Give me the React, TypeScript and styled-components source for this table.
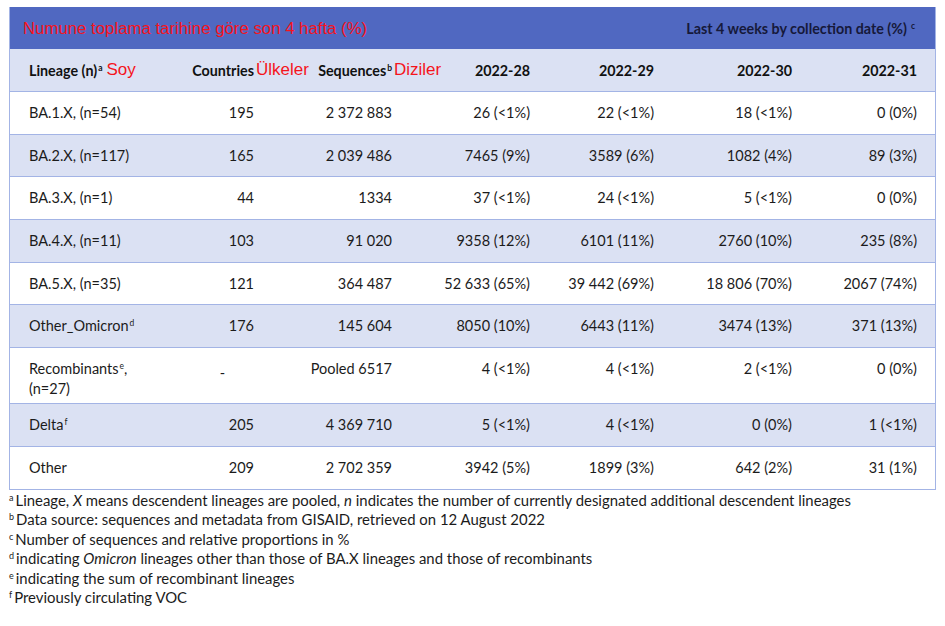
import React from 'react';
import styled, { createGlobalStyle } from 'styled-components';

const GlobalStyle = createGlobalStyle`
  html, body {
    margin: 0;
    padding: 0;
    background: #ffffff;
  }
  body {
    font-family: Lato, "Open Sans", sans-serif;
    color: #1b1b1b;
  }
`;

const COLS = '161px 103px 138px 138px 124px 138px 125px';

const Page = styled.div`
  width: 945px;
  height: 626px;
  padding: 7px 0 0 9px;
  box-sizing: border-box;
  overflow: hidden;
`;

const Table = styled.div`
  width: 927px;
  box-sizing: border-box;
  border-left: 1px solid #a3b4e5;
  border-right: 1px solid #a3b4e5;
`;

const Banner = styled.div`
  height: 42px;
  background: #5068c1;
  display: flex;
  align-items: center;
  justify-content: space-between;
  padding: 0 20px 0 13px;
`;

const BannerTitle = styled.span`
  font-family: "Liberation Sans", Arial, sans-serif;
  font-size: 16.8px;
  color: #f5141c;
  padding-top: 1px;
`;

const BannerNote = styled.span`
  font-size: 14.3px;
  font-weight: 700;
  color: #16193a;
`;

const Row = styled.div<{ $shade?: boolean; $tall?: boolean }>`
  display: grid;
  grid-template-columns: ${COLS};
  height: ${p => (p.$tall ? '55px' : '41.7px')};
  background: ${p => (p.$shade ? '#dbe1f3' : '#ffffff')};
  border-bottom: 1px solid #a3b4e5;
`;

const HeadRow = styled(Row)`
  height: 42px;
  align-items: center;
`;

const HeadCell = styled.div<{ $left?: boolean }>`
  font-size: 14.3px;
  font-weight: 700;
  color: #111111;
  text-align: ${p => (p.$left ? 'left' : 'right')};
  padding: 0 20px 0 ${p => (p.$left ? '19px' : '0')};
  white-space: nowrap;
`;

const Tagged = styled.span`
  position: relative;
`;

const RedNote = styled.span<{ $gap?: number }>`
  position: absolute;
  left: 100%;
  top: 50%;
  transform: translateY(-52%);
  margin-left: ${p => p.$gap ?? 0}px;
  font-family: "Liberation Sans", Arial, sans-serif;
  font-weight: 400;
  font-size: 17px;
  color: #f5141c;
  white-space: nowrap;
`;

const Cell = styled.div<{ $left?: boolean; $center?: boolean; $drop?: number }>`
  font-size: 14.5px;
  line-height: 20px;
  text-align: ${p => (p.$left ? 'left' : p.$center ? 'center' : 'right')};
  padding: ${p => 11 + (p.$drop ?? 0)}px ${p => (p.$center ? '0' : '20px')} 0 ${p => (p.$left ? '19px' : '0')};
  white-space: nowrap;
`;

const Sup = styled.sup`
  font-size: 8.5px;
  line-height: 0;
  vertical-align: 5px;
  margin-left: 1px;
`;

const Notes = styled.div`
  padding: 1px 0 0 0;
  font-size: 14.9px;
  line-height: 19.6px;
  color: #1b1b1b;
`;

const Note = styled.div`
  white-space: nowrap;
`;

const NoteSup = styled.sup`
  font-size: 9px;
  line-height: 0;
  vertical-align: 5px;
  margin-right: 2px;
`;

type Data = {
  name: React.ReactNode;
  countries: string;
  sequences: string;
  weeks: string[];
  tall?: boolean;
};

const rows: Data[] = [
  { name: 'BA.1.X, (n=54)', countries: '195', sequences: '2 372 883', weeks: ['26 (<1%)', '22 (<1%)', '18 (<1%)', '0 (0%)'] },
  { name: 'BA.2.X, (n=117)', countries: '165', sequences: '2 039 486', weeks: ['7465 (9%)', '3589 (6%)', '1082 (4%)', '89 (3%)'] },
  { name: 'BA.3.X, (n=1)', countries: '44', sequences: '1334', weeks: ['37 (<1%)', '24 (<1%)', '5 (<1%)', '0 (0%)'] },
  { name: 'BA.4.X, (n=11)', countries: '103', sequences: '91 020', weeks: ['9358 (12%)', '6101 (11%)', '2760 (10%)', '235 (8%)'] },
  { name: 'BA.5.X, (n=35)', countries: '121', sequences: '364 487', weeks: ['52 633 (65%)', '39 442 (69%)', '18 806 (70%)', '2067 (74%)'] },
  { name: <>Other_Omicron<Sup>d</Sup></>, countries: '176', sequences: '145 604', weeks: ['8050 (10%)', '6443 (11%)', '3474 (13%)', '371 (13%)'] },
  {
    name: <>Recombinants<Sup>e</Sup>,<br />(n=27)</>,
    countries: '-',
    sequences: 'Pooled 6517',
    weeks: ['4 (<1%)', '4 (<1%)', '2 (<1%)', '0 (0%)'],
    tall: true,
  },
  { name: <>Delta<Sup>f</Sup></>, countries: '205', sequences: '4 369 710', weeks: ['5 (<1%)', '4 (<1%)', '0 (0%)', '1 (<1%)'] },
  { name: 'Other', countries: '209', sequences: '2 702 359', weeks: ['3942 (5%)', '1899 (3%)', '642 (2%)', '31 (1%)'] },
];

const App: React.FC = () => {
  return (
    <Page>
      <GlobalStyle />
      <Table>
        <Banner>
          <BannerTitle>Numune toplama tarihine göre son 4 hafta (%)</BannerTitle>
          <BannerNote>
            Last 4 weeks by collection date (%)<Sup style={{ marginLeft: 4 }}>c</Sup>
          </BannerNote>
        </Banner>
        <HeadRow $shade>
          <HeadCell $left>
            <Tagged>
              Lineage (n)<Sup>a</Sup>
              <RedNote $gap={4}>Soy</RedNote>
            </Tagged>
          </HeadCell>
          <HeadCell>
            <Tagged>
              Countries
              <RedNote $gap={2}>Ülkeler</RedNote>
            </Tagged>
          </HeadCell>
          <HeadCell>
            <Tagged>
              Sequences<Sup>b</Sup>
              <RedNote $gap={2}>Diziler</RedNote>
            </Tagged>
          </HeadCell>
          <HeadCell>2022-28</HeadCell>
          <HeadCell>2022-29</HeadCell>
          <HeadCell>2022-30</HeadCell>
          <HeadCell>2022-31</HeadCell>
        </HeadRow>
        {rows.map((r, i) => (
          <Row key={i} $shade={i % 2 === 1} $tall={r.tall}>
            <Cell $left>{r.name}</Cell>
            {r.countries === '-' ? (
              <Cell $center $drop={4}>-</Cell>
            ) : (
              <Cell>{r.countries}</Cell>
            )}
            <Cell>{r.sequences}</Cell>
            {r.weeks.map((w, j) => (
              <Cell key={j}>{w}</Cell>
            ))}
          </Row>
        ))}
      </Table>
      <Notes>
        <Note>
          <NoteSup>a</NoteSup>Lineage, <i>X</i> means descendent lineages are pooled, <i>n</i> indicates the number of currently designated additional descendent lineages
        </Note>
        <Note>
          <NoteSup>b</NoteSup>Data source: sequences and metadata from GISAID, retrieved on 12 August 2022
        </Note>
        <Note>
          <NoteSup>c</NoteSup>Number of sequences and relative proportions in %
        </Note>
        <Note>
          <NoteSup>d</NoteSup>indicating <i>Omicron</i> lineages other than those of BA.X lineages and those of recombinants
        </Note>
        <Note>
          <NoteSup>e</NoteSup>indicating the sum of recombinant lineages
        </Note>
        <Note>
          <NoteSup>f</NoteSup>Previously circulating VOC
        </Note>
      </Notes>
    </Page>
  );
};

export default App;
